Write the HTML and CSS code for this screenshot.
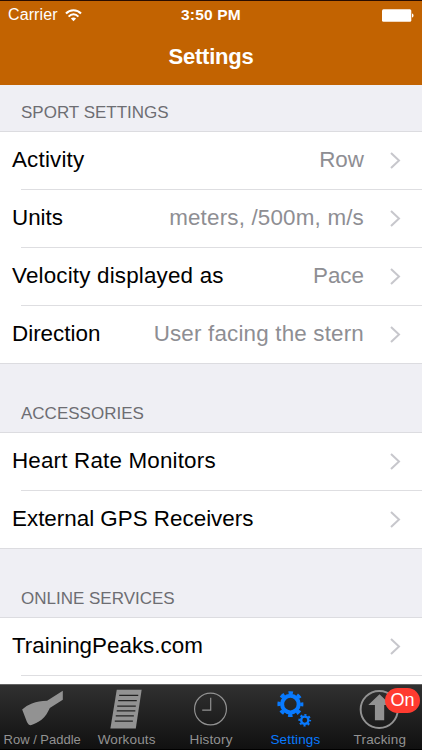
FILE: index.html
```html
<!DOCTYPE html>
<html lang="en">
<head>
    <meta charset="UTF-8">
    <meta name="viewport" content="width=device-width, initial-scale=1.0">
    <title>Settings</title>
    <link rel="stylesheet" href="styles.css">
</head>
<body>
    <header class="header">
        <div class="status">
            <div class="carrier">
                <span>Carrier</span>
                <svg class="wifi" width="17" height="13" viewBox="0 0 17 13" fill="none" stroke="#fff" stroke-width="2">
                    <path d="M1 4.500C5 0 12 0 16 4.500M3.600 7.600c2.800-3 7-3 9.800 0"/>
                    <path d="M8.500 12.300L5.900 9.600c1.500-1.500 3.700-1.500 5.200 0z" fill="#fff" stroke="none"/>
                </svg>
            </div>
            <span class="time">3:50 PM</span>
            <div class="battery">
                <svg width="32" height="13" viewBox="0 0 32 13" fill="#fff">
                    <rect x="0" y="0.2" width="29.3" height="12.5" rx="1.5"/>
                    <path d="M30 4.500c2 .6 2 3.400 0 4z"/>
                </svg>
            </div>
        </div>
        <h1>Settings</h1>
    </header>

    <main class="content">
        <section>
            <h2 class="first">SPORT SETTINGS</h2>
            <ul class="list">
                <li><span class="label wide">Activity</span><span class="value">Row</span><svg class="arrow" viewBox="0 0 11 17"><path d="M1 1l8 7.500L1 16"/></svg></li>
                <li><span class="label">Units</span><span class="value wide">meters, /500m, m/s</span><svg class="arrow" viewBox="0 0 11 17"><path d="M1 1l8 7.500L1 16"/></svg></li>
                <li><span class="label wide">Velocity displayed as</span><span class="value">Pace</span><svg class="arrow" viewBox="0 0 11 17"><path d="M1 1l8 7.500L1 16"/></svg></li>
                <li><span class="label">Direction</span><span class="value wide">User facing the stern</span><svg class="arrow" viewBox="0 0 11 17"><path d="M1 1l8 7.500L1 16"/></svg></li>
            </ul>
        </section>

        <section>
            <h2>ACCESSORIES</h2>
            <ul class="list">
                <li><span class="label wide">Heart Rate Monitors</span><svg class="arrow" viewBox="0 0 11 17"><path d="M1 1l8 7.500L1 16"/></svg></li>
                <li><span class="label">External GPS Receivers</span><svg class="arrow" viewBox="0 0 11 17"><path d="M1 1l8 7.500L1 16"/></svg></li>
            </ul>
        </section>

        <section>
            <h2>ONLINE SERVICES</h2>
            <ul class="list">
                <li><span class="label">TrainingPeaks.com</span><svg class="arrow" viewBox="0 0 11 17"><path d="M1 1l8 7.500L1 16"/></svg></li>
                <li></li>
            </ul>
        </section>
    </main>

    <nav class="tabs">
        <a class="tab">
            <svg width="44" height="44" viewBox="0 0 44 44" fill="#929292">
                <path d="M43.300 2.700V12L30 20.500c-2.200 4.500-4.500 9-8.500 12-3.500 2.700-7.500 4.500-11 5.500-2 0-3-1.500-4-3.500L1.700 22c3-2.800 6-4.800 10-6.200 5-1.800 9.500-2.600 15.500-2.800z"/>
            </svg>
            <span class="narrow">Row / Paddle</span>
        </a>
        <a class="tab">
            <svg width="44" height="44" viewBox="0 0 44 44">
                <path d="M11.500 1.800H37L31 41.500H5z" fill="#929292"/>
                <path d="M14 7.500h19.500M13 13h19M12 18.500h19M11.500 23.500h19M10.500 28.500H29M9.500 34H28" stroke="#222" stroke-width="1.300"/>
            </svg>
            <span>Workouts</span>
        </a>
        <a class="tab">
            <svg width="44" height="44" viewBox="0 0 44 44" fill="none" stroke="#929292" stroke-width="1.200">
                <circle cx="21.500" cy="21.500" r="16.300"/>
                <path d="M21.700 10v12.700H13"/>
            </svg>
            <span>History</span>
        </a>
        <a class="tab active">
            <svg width="44" height="44" viewBox="0 0 44 44" fill="none" stroke="#087aff">
                <circle cx="17.300" cy="16.500" r="8.500" stroke-width="4.200"/>
                <circle cx="17.300" cy="16.500" r="11.700" stroke-width="3.200" stroke-dasharray="4.594 4.594" stroke-dashoffset="2.297"/>
                <circle cx="32" cy="33" r="3.700" stroke-width="2.400"/>
                <circle cx="32" cy="33" r="5.500" stroke-width="2" stroke-dasharray="2.160 2.160" stroke-dashoffset="1.080"/>
            </svg>
            <span>Settings</span>
        </a>
        <a class="tab">
            <svg width="44" height="44" viewBox="0 0 44 44">
                <circle cx="21.200" cy="22" r="19" fill="none" stroke="#929292" stroke-width="2"/>
                <path d="M21.500 6.500L33 17.500h-6.700V33h-9.500V17.500H10z" fill="#929292"/>
            </svg>
            <span>Tracking</span>
            <b class="badge">On</b>
        </a>
    </nav>
</body>
</html>
```

FILE: styles.css
```css
* {
    box-sizing: border-box;
}
body {
    margin: 0;
    height: 750px;
    display: flex;
    flex-direction: column;
    overflow: hidden;
    font-family: "Liberation Sans", Arial, sans-serif;
    background-color: #efeff4;
}
.header {
    height: 85px;
    flex: none;
    background-color: #c26301;
    border-top: 1px solid #2a0d00;
    color: #fff;
}
.status {
    display: grid;
    grid-template-columns: 1fr auto 1fr;
    height: 28px;
    padding: 0 8px;
    align-items: center;
    font-size: 16px;
}
.carrier {
    display: flex;
    align-items: center;
    gap: 7px;
    letter-spacing: 0.1px;
}
.time {
    font-weight: bold;
    font-size: 15.5px;
    letter-spacing: 0.2px;
}
.battery {
    display: flex;
    justify-content: flex-end;
}
h1 {
    margin: 0;
    font-size: 22px;
    line-height: 55px;
    text-align: center;
    letter-spacing: -0.2px;
}
.content {
    flex: 1;
    min-height: 0;
    overflow: hidden;
}
h2 {
    margin: 0;
    height: 69px;
    padding: 40px 21px 0;
    font-size: 17px;
    line-height: 21px;
    font-weight: normal;
    color: #6d6d72;
}
h2.first {
    height: 46px;
    padding-top: 17px;
}
.list {
    margin: 0 0 -1px;
    padding: 0;
    list-style: none;
    background-color: #fff;
    border-top: 1px solid #dcdce0;
    border-bottom: 1px solid #dcdce0;
}
.list li {
    display: flex;
    align-items: center;
    height: 58px;
    padding: 0 21px 2px 12px;
    line-height: 26px;
    background: linear-gradient(#dedee1, #dedee1) 21px 100% / 100% 1px no-repeat;
}
.list li:last-child {
    height: 57px;
    padding-bottom: 1px;
    background: none;
}
.label {
    flex: 1;
    font-size: 22.4px;
    color: #000;
}
.value {
    font-size: 22.4px;
    color: #8e8e93;
    margin-right: 26px;
}
.wide {
    letter-spacing: 0.18px;
}
.arrow {
    width: 11px;
    height: 17px;
    fill: none;
    stroke: #c7c7cc;
    stroke-width: 2;
}
.tabs {
    display: flex;
    flex: none;
    height: 66px;
    border-top: 1px solid #636363;
    border-bottom: 1px solid #000;
    background: linear-gradient(#303030, #101010);
}
.tab {
    position: relative;
    flex: 1 1 0;
    min-width: 0;
    display: flex;
    flex-direction: column;
    align-items: center;
    padding-top: 3px;
    font-size: 13.5px;
    line-height: 18px;
    letter-spacing: 0.15px;
    color: #929292;
    white-space: nowrap;
}
.narrow {
    font-size: 13px;
    letter-spacing: 0;
}
.active {
    color: #087aff;
}
.badge {
    position: absolute;
    top: 3px;
    right: 2px;
    width: 35px;
    height: 25px;
    border-radius: 13px;
    background-color: #ff3b30;
    color: #fff;
    font-size: 18px;
    font-weight: normal;
    line-height: 25px;
    text-align: center;
}
```
